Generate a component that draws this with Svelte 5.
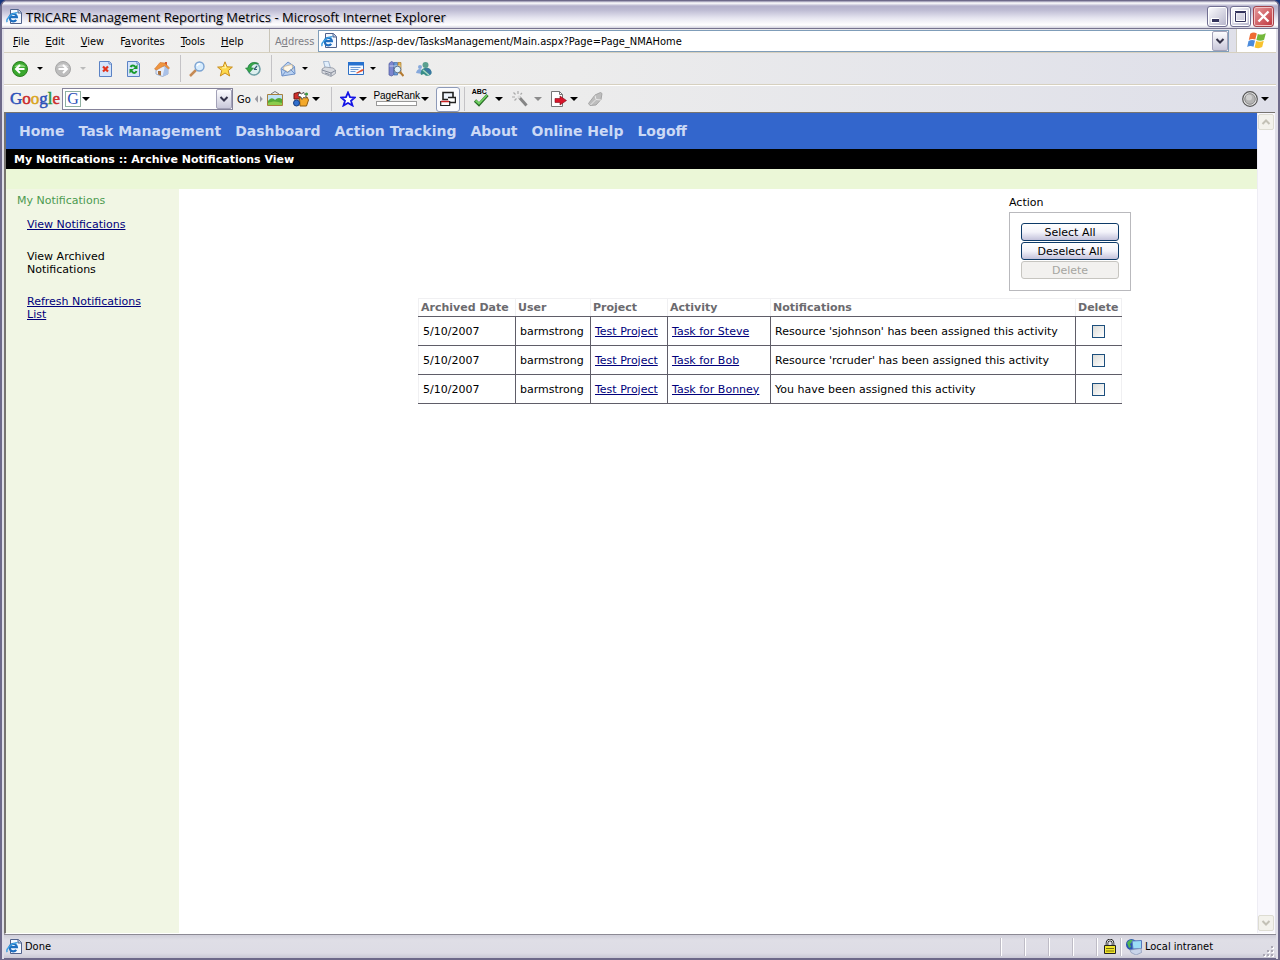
<script lang="ts">
	interface Notice {
		date: string;
		user: string;
		project: string;
		activity: string;
		text: string;
		checked: boolean;
	}

	const menus = [
		['', 'F', 'ile'],
		['', 'E', 'dit'],
		['', 'V', 'iew'],
		['F', 'a', 'vorites'],
		['', 'T', 'ools'],
		['', 'H', 'elp']
	];

	const nav = ['Home', 'Task Management', 'Dashboard', 'Action Tracking', 'About', 'Online Help', 'Logoff'];

	let url = $state('https://asp-dev/TasksManagement/Main.aspx?Page=Page_NMAHome');
	let query = $state('');

	let notices: Notice[] = $state([
		{
			date: '5/10/2007',
			user: 'barmstrong',
			project: 'Test Project',
			activity: 'Task for Steve',
			text: "Resource 'sjohnson' has been assigned this activity",
			checked: false
		},
		{
			date: '5/10/2007',
			user: 'barmstrong',
			project: 'Test Project',
			activity: 'Task for Bob',
			text: "Resource 'rcruder' has been assigned this activity",
			checked: false
		},
		{
			date: '5/10/2007',
			user: 'barmstrong',
			project: 'Test Project',
			activity: 'Task for Bonney',
			text: 'You have been assigned this activity',
			checked: false
		}
	]);

	const anyChecked = $derived(notices.some((n) => n.checked));

	function setAll(value: boolean) {
		for (const n of notices) n.checked = value;
	}

	function removeChecked() {
		notices = notices.filter((n) => !n.checked);
	}
</script>

{#snippet ie()}
	<svg class="icon" viewBox="0 0 16 16" aria-hidden="true">
		<path d="M4.500.500h8l3 3v11h-11z" fill="#f4f8ff" stroke="#50628c" />
		<path d="M12 .5V4h3.5" fill="#b9cbe8" stroke="#50628c" />
		<path d="M10.200 10.800A3.700 3.700 0 1 1 10.900 8.200H3.600" fill="none" stroke="#1f6fc0" stroke-width="2.200" />
		<path d="M1.200 13.200C-.5 10.500 5 4 11.500 3.600" fill="none" stroke="#3e9fe0" stroke-width="1.400" />
	</svg>
{/snippet}

{#snippet caret(label: string, muted = false)}
	<button class="caret" class:muted aria-label={label}></button>
{/snippet}

{#snippet chevron(up = false)}
	<svg class="chevron" viewBox="0 0 10 8" aria-hidden="true">
		<path d={up ? 'M1.500 6 5 2.500 8.500 6' : 'M1.500 2 5 5.500 8.500 2'} fill="none" stroke="currentColor" stroke-width="2" />
	</svg>
{/snippet}

<div class="window">
	<header class="titlebar">
		{@render ie()}
		<h1>TRICARE Management Reporting Metrics - Microsoft Internet Explorer</h1>
		<button class="win-btn" aria-label="Minimize">
			<svg viewBox="0 0 19 19"><path d="M3 13.500h8" stroke="#fff" stroke-width="5" /><path d="M4 13.500h7" stroke="#34345c" stroke-width="3" /></svg>
		</button>
		<button class="win-btn" aria-label="Maximize">
			<svg viewBox="0 0 19 19"><path d="M4 4.500h11v10H4z" fill="none" stroke="#fff" stroke-width="3" /><path d="M4.500 5.500h10v9h-10zM4 4.500h11" fill="none" stroke="#34345c" /></svg>
		</button>
		<button class="win-btn close" aria-label="Close">
			<svg viewBox="0 0 19 19"><path d="m4.500 4.500 10 10m0-10-10 10" stroke="#fff" stroke-width="2.400" /></svg>
		</button>
	</header>

	<div class="chrome">
		<div class="menubar">
			<nav class="menus" aria-label="Menu bar">
				{#each menus as [pre, key, post] (post)}
					<button>{pre}<u>{key}</u>{post}</button>
				{/each}
			</nav>
			<div class="address">
				<label for="url">A<u>d</u>dress</label>
				<div class="field">
					{@render ie()}
					<input id="url" type="text" bind:value={url} />
					<button class="drop" aria-label="Show addresses">{@render chevron()}</button>
				</div>
			</div>
			<div class="flag">
				<svg viewBox="0 0 20 18" aria-hidden="true">
					<path d="M3.200 1.800C5.500.300 7.300.300 9.800 1.400L8.300 7.600C6 6.700 4 6.800 1.800 8z" fill="#ef6a32" />
					<path d="M10.800 1.900c2.400 1 4.800 1 8-.700l-1.700 6.500c-2.300 1.300-4.900 1.300-7.700.300z" fill="#74b83c" />
					<path d="M1.500 9c2.300-1.200 4.300-1.300 6.500-.400L6.500 14.800c-2.300-1-4.300-.900-6.300.300z" fill="#4b8bdc" />
					<path d="M9.100 9.100c2.800 1 5.200.900 7.700-.300l-1.600 6.300c-2.600 1.500-5 1.400-7.600.300z" fill="#f8c22e" />
				</svg>
			</div>
		</div>

		<div class="toolbar standard">
			<div class="split loose">
				<button class="tool" aria-label="Back">
					<svg class="icon" viewBox="0 0 16 16"><circle cx="8" cy="8" r="7.500" fill="#3aa82e" stroke="#2b7d20" /><path d="M2.500 6a6 4.500 0 0 1 11 0" fill="#8bd67a" /><path d="M12.500 8h-8M8 4 4 8l4 4" fill="none" stroke="#fff" stroke-width="2" /></svg>
				</button>
				{@render caret('Back history')}
			</div>
			<div class="split loose">
				<button class="tool" aria-label="Forward">
					<svg class="icon" viewBox="0 0 16 16"><circle cx="8" cy="8" r="7.500" fill="#bdbdbd" stroke="#a6a6a6" /><path d="M2.500 6a6 4.500 0 0 1 11 0" fill="#d8d8d8" /><path d="M3.500 8h8M8 4l4 4-4 4" fill="none" stroke="#fff" stroke-width="2" /></svg>
				</button>
				{@render caret('Forward history', true)}
			</div>
			<button class="tool" aria-label="Stop">
				<svg class="icon" viewBox="0 0 16 16"><path d="M1.500.500h10l2 2v13h-12z" fill="#d4e4fb" stroke="#5b82c4" /><path d="M11 .500v2.500h2.500" fill="#fff" stroke="#5b82c4" /><path d="m5 5.500 5 5m0-5-5 5" stroke="#e2331c" stroke-width="2.200" /></svg>
			</button>
			<button class="tool" aria-label="Refresh">
				<svg class="icon" viewBox="0 0 16 16"><path d="M1.500.500h10l2 2v13h-12z" fill="#d4e4fb" stroke="#5b82c4" /><path d="M11 .500v2.500h2.500" fill="#fff" stroke="#5b82c4" /><path d="M4.500 6c1-2 3.500-2 5 0M10.500 10c-1 2.500-3.500 2.500-5 0" fill="none" stroke="#189a2d" stroke-width="2" /><path d="M11.500 3.500V8H7zM3.500 12.500V8H8z" fill="#189a2d" /></svg>
			</button>
			<button class="tool" aria-label="Home">
				<svg class="icon" viewBox="0 0 16 16"><path d="M2 8.500 7 4l5 2.500 2 1.500v5l-5.500 2.500L2 13z" fill="#e6edf9" stroke="#7d97c3" stroke-width=".7" /><path d="m8.500 15.500 5.500-2.500V7l-3-2z" fill="#a9c1e8" /><path d="M.500 8 6 1.500l5 .500L15.500 7l-1 1-4-3.500-8 4.500z" fill="#ef9540" stroke="#c76a20" stroke-width=".5" /><path d="M11 1h2v3.500l-2-2z" fill="#d25a32" /><path d="M4 10h3v4.500l-3-1z" fill="#a86f3a" /></svg>
			</button>
			<span class="sep"></span>
			<button class="tool" aria-label="Search">
				<svg class="icon" viewBox="0 0 16 16"><path d="m1 15 6-6" stroke="#c58a55" stroke-width="2.500" /><circle cx="10.500" cy="5.500" r="4.500" fill="#d7ecfd" stroke="#7ba3d2" stroke-width="1.400" /><path d="M8 5a3 3 0 0 1 3-2.200" fill="none" stroke="#fff" stroke-width="1.400" /></svg>
			</button>
			<button class="tool" aria-label="Favorites">
				<svg class="icon" viewBox="0 0 16 16"><path d="m8 .8 2 5 5.400.300-4.200 3.500 1.500 5.400L8 12l-4.700 3 1.500-5.400L.600 6.100 6 5.800z" fill="#fdd94c" stroke="#c98c1c" /><path d="m8 3.500 1 3.300H5" fill="none" stroke="#fff6b8" /></svg>
			</button>
			<button class="tool" aria-label="History">
				<svg class="icon" viewBox="0 0 16 16"><circle cx="9" cy="8" r="6" fill="#dcefee" stroke="#6d9fa5" stroke-width="1.600" /><path d="M9 8.500 12 5M9 8.500h3" stroke="#365b74" stroke-width="1.200" /><path d="M13.500 2.500C9 0 3.500 2 3 7H.500l4 4.500L8.500 7H6c0-3 4-5 7.500-4.500z" fill="#38a84a" stroke="#1d7a35" stroke-width=".6" /></svg>
			</button>
			<span class="sep"></span>
			<div class="split">
				<button class="tool" aria-label="Mail">
					<svg class="icon" viewBox="0 0 16 16"><path d="M1 7.500 8 1l6.500 4.500L15 13 2 15z" fill="#b8d1f2" stroke="#6f92c8" /><path d="m4 5.500 8-2 .8 5L8 11 3.500 8.500z" fill="#fff8e8" stroke="#c8a875" stroke-width=".6" /><path d="m1.500 8 6 3.500L14.500 6M2 15l4-5M15 13l-4.500-4.500" fill="none" stroke="#6f92c8" /></svg>
				</button>
				{@render caret('Mail options')}
			</div>
			<button class="tool" aria-label="Print">
				<svg class="icon" viewBox="0 0 16 16"><path d="m3.500.500 5-.3 2 7-5 1z" fill="#e2effc" stroke="#8ea6c4" stroke-width=".8" /><path d="M2 8 5 6l8 1 2.500 2v3.500L11 15.500 2 12z" fill="#d6d9df" stroke="#8f95a1" stroke-width=".8" /><path d="m2 9 9 3 4.500-2.500M11 12v3M5 12l4.500 1.500" fill="none" stroke="#848b99" /></svg>
			</button>
			<div class="split">
				<button class="tool" aria-label="Edit">
					<svg class="icon" viewBox="0 0 16 16"><path d="M.500 1.500h15v12H.500z" fill="#f2f8ff" stroke="#2d6fc4" /><path d="M0 1h16v3.500H0z" fill="#2671cf" /><path d="M2.500 6.500h10M2.500 8.500h8M2.500 10.500h5" stroke="#6c9ad4" /><path d="m8 12 5.500-3.500L16 8l-1 2-6 2.500z" fill="#e4542f" /></svg>
				</button>
				{@render caret('Edit options')}
			</div>
			<button class="tool" aria-label="Research">
				<svg class="icon" viewBox="0 0 16 16"><path d="M1 2.500 3.500.500l2 1V14l-2 1L1 14z" fill="#7c86cf" stroke="#4c569b" stroke-width=".7" /><path d="M6 1.500h3.500V14H6z" fill="#6b9bd8" stroke="#406fac" stroke-width=".7" /><path d="M10 1.500h3V12h-3z" fill="#e4b458" stroke="#a87b2a" stroke-width=".7" /><path d="M1.500 5h11" stroke="#fff" stroke-opacity=".6" /><circle cx="9.500" cy="8.500" r="3.300" fill="#dff1fb" stroke="#64778e" /><path d="m12 11 3.500 4" stroke="#b47a30" stroke-width="2" /></svg>
			</button>
			<button class="tool" aria-label="Messenger">
				<svg class="icon" viewBox="0 0 16 16"><circle cx="4" cy="6" r="2" fill="#86a9dc" /><path d="M0 12c1-5 5-5 7-2l-1 3z" fill="#86a9dc" /><circle cx="9.500" cy="4" r="3" fill="#5aa08f" /><path d="M5 14c-1-3 1-7 4-7 4-1 7 2 6.500 5.500C14 15 10 16 8 13z" fill="#368d87" /><path d="m7 9 6 5" stroke="#a9d7c2" stroke-width="1.500" /><path d="M8 7.500h5c3 2 3 5 1 6.500z" fill="#3d6eaf" fill-opacity=".7" /></svg>
			</button>
		</div>

		<div class="toolbar google">
			<span class="logo"><i class="b">G</i><i class="r">o</i><i class="y">o</i><i class="b">g</i><i class="g">l</i><i class="r">e</i></span>
			<div class="field search">
				<span class="g-mark">G</span>
				{@render caret('Search type')}
				<input type="text" aria-label="Google search" bind:value={query} />
				<button class="drop" aria-label="Search history">{@render chevron()}</button>
			</div>
			<button class="go">Go</button>
			<span class="grip"></span>
			<button class="tool" aria-label="Images">
				<svg class="icon" viewBox="0 0 16 16"><path d="m4 3 4-2.500L12 3" fill="none" stroke="#777" /><path d="M.500 3.500h15v11H.500z" fill="#bfe2f6" stroke="#a8803c" /><path d="M1 10c3-4 5-3 7-1 2-2 4-3 7-1v6H1z" fill="#54a836" /><path d="M1 12c4-2 9-2 14 0v2H1z" fill="#8ccc4c" /></svg>
			</button>
			<div class="split tight">
				<button class="tool" aria-label="Games">
					<svg class="icon" viewBox="0 0 16 16"><path d="M1 2.500 7 1v7H1z" fill="#d22f2a" stroke="#6d1713" /><path d="M6.500 7 14 6l1.500 3-2 6H7z" fill="#f4a92a" stroke="#8f5a10" /><circle cx="3.500" cy="12" r="3" fill="#2f6fce" stroke="#183d7c" /><path d="m6 2 3 1 1.500-2 1 2.500 3-.5-2 2 1 2-3-.500L9 8.500 8 6 5 5z" fill="#fff" stroke="#333" stroke-width=".7" /><circle cx="13.500" cy="3" r="1.500" fill="#3a9a42" /></svg>
				</button>
				{@render caret('Games options')}
			</div>
			<span class="sep"></span>
			<div class="split tight">
				<button class="tool" aria-label="Bookmarks">
					<svg class="icon" viewBox="0 0 16 16"><path d="m8 1.500 2 4.700 5 .300-4 3.300 1.500 4.700L8 12l-4.500 2.500L5 9.800 1 6.500l5-.300z" fill="#fff" stroke="#1414e6" stroke-width="1.800" /></svg>
				</button>
				{@render caret('Bookmark options')}
			</div>
			<div class="split tight">
				<button class="rank">PageRank<span></span></button>
				{@render caret('PageRank options')}
			</div>
			<button class="popup" aria-label="Popup blocker">
				<svg class="icon" viewBox="0 0 16 16"><path d="M3 1.500h10v7H3z" fill="#eef3fc" stroke="#222" stroke-width="1.600" /><path d="M8 6.500h7.500v5H8" fill="#fff" stroke="#222" stroke-width="1.400" /><path d="M.700 10.500h9v4h-9z" fill="#fff" stroke="#222" stroke-width="1.200" /><path d="M1 10.500h8" stroke="#c22" stroke-width="1.300" /></svg>
			</button>
			<span class="sep snug"></span>
			<div class="split">
				<button class="tool spell" aria-label="Spell check">
					<span>ABC</span>
					<svg class="icon" viewBox="0 0 16 16"><path d="m2 9.500 4 4L14.500 4" fill="none" stroke="#2c702a" stroke-width="3.200" /><path d="m2.500 9.500 3.500 3L14 4" fill="none" stroke="#6fd060" stroke-width="1.800" /></svg>
				</button>
				{@render caret('Spell check options')}
			</div>
			<div class="split">
				<button class="tool" aria-label="AutoFill">
					<svg class="icon" viewBox="0 0 16 16"><path d="m7 6 7.500 8.500" stroke="#858585" stroke-width="3" /><path d="m6 5 2 2" stroke="#ddd" stroke-width="3" /><path d="M6 0v3M1.500 1.500l2 2M0 6h3M2.500 9.500l2-2M10 2 8.500 3.500" stroke="#aaa" stroke-width="1.200" /></svg>
				</button>
				{@render caret('AutoFill options', true)}
			</div>
			<div class="split tight">
				<button class="tool" aria-label="Send to">
					<svg class="icon" viewBox="0 0 16 16"><path d="M.500.500h8l3 3v12H.500z" fill="#fff" stroke="#777" /><path d="M8.500.500v3h3" fill="none" stroke="#777" /><path d="M4 7.500h5V5l6.500 4.500L9 14v-2.500H4z" fill="#d8142a" stroke="#7c0b18" stroke-width=".6" /></svg>
				</button>
				{@render caret('Send options')}
			</div>
			<button class="tool" aria-label="Highlight">
				<svg class="icon" viewBox="0 0 16 16"><path d="M1.500 12.500 8 4l5.500-2.500 1.500 1-1 6-5 5.500-6 .500z" fill="#bdbdbd" stroke="#a5a5a5" /><path d="m8 4.500 1 4 5 .500M9 8.500 3.500 14" fill="none" stroke="#e8e8e8" /></svg>
			</button>
			<div class="split tight account">
				<button class="tool" aria-label="Account">
					<svg class="icon" viewBox="0 0 16 16"><circle cx="8" cy="8" r="7.300" fill="#e8e8e8" stroke="#555" stroke-width="1.200" /><circle cx="8" cy="8" r="5.300" fill="#b4b4b4" stroke="#8b8b8b" /><circle cx="7" cy="6.500" r="3" fill="#cfcfcf" /></svg>
				</button>
				{@render caret('Account options')}
			</div>
		</div>
	</div>

	<div class="viewport">
		<div class="page">
			<nav class="topnav" aria-label="Site">
				{#each nav as item (item)}
					<a href="#top">{item}</a>
				{/each}
			</nav>
			<h2 class="crumb">My Notifications :: Archive Notifications View</h2>
			<div class="strip"></div>
			<div class="columns">
				<aside>
					<h3>My Notifications</h3>
					<ul>
						<li><a href="#view">View Notifications</a></li>
						<li>View Archived Notifications</li>
						<li><a href="#refresh">Refresh Notifications List</a></li>
					</ul>
				</aside>
				<main>
					<div class="action">
						<span id="action-title">Action</span>
						<div class="panel" role="group" aria-labelledby="action-title">
							<button onclick={() => setAll(true)}>Select All</button>
							<button onclick={() => setAll(false)}>Deselect All</button>
							<button disabled={!anyChecked} onclick={removeChecked}>Delete</button>
						</div>
					</div>
					<table>
						<thead>
							<tr>
								<th class="date">Archived Date</th>
								<th class="user">User</th>
								<th class="project">Project</th>
								<th class="activity">Activity</th>
								<th class="text">Notifications</th>
								<th class="del">Delete</th>
							</tr>
						</thead>
						<tbody>
							{#each notices as n (n.activity)}
								<tr>
									<td>{n.date}</td>
									<td>{n.user}</td>
									<td><a href="#project">{n.project}</a></td>
									<td><a href="#activity">{n.activity}</a></td>
									<td>{n.text}</td>
									<td class="check"><input type="checkbox" aria-label="Delete {n.activity}" bind:checked={n.checked} /></td>
								</tr>
							{/each}
						</tbody>
					</table>
				</main>
			</div>
		</div>
		<div class="scrollbar">
			<button aria-label="Scroll up">{@render chevron(true)}</button>
			<button aria-label="Scroll down">{@render chevron()}</button>
		</div>
	</div>

	<footer class="status">
		<span class="state">{@render ie()}Done</span>
		<span class="cell"></span>
		<span class="cell"></span>
		<span class="cell"></span>
		<span class="cell"></span>
		<span class="cell">
			<svg class="icon" viewBox="0 0 16 16" aria-label="Secure" role="img"><path d="M5 7V4a3 3 0 0 1 6 0v3" fill="none" stroke="#222" stroke-width="2.600" /><path d="M5 7V4a3 3 0 0 1 6 0v3" fill="none" stroke="#ddd" /><path d="M2.500 6.500h11v8h-11z" fill="#f0e52c" stroke="#222" /><path d="M4 9.500h8M4 12h8" stroke="#77710a" /></svg>
		</span>
		<span class="cell zone">
			<svg class="icon" viewBox="0 0 16 16" aria-hidden="true"><circle cx="5.500" cy="5.500" r="5.500" fill="#2a54b4" /><path d="M1 4c2-4 6-4 6-2L4 5l1 3-2 1z" fill="#51b653" /><path d="m6 2 9.500-.500v8L7 10z" fill="#9adcf6" stroke="#5878bd" /><path d="m4 11 11-1.500.500 4L10 16l-5-2.500z" fill="#c9d4ea" stroke="#8493b5" stroke-width=".7" /></svg>
			Local intranet
		</span>
		<svg class="resize" viewBox="0 0 12 12" aria-hidden="true">
			<path d="M9 2h2M5 6h2M9 6h2M1 10h2M5 10h2M9 10h2" stroke="#fff" stroke-width="2" />
			<path d="M8 1h2M4 5h2M8 5h2M0 9h2M4 9h2M8 9h2" stroke="#aaa8b4" stroke-width="2" />
		</svg>
	</footer>
</div>

<style>
	:global(body) {
		background: #16357e;
	}

	.window {
		--ui: 'DejaVu Sans Condensed', 'DejaVu Sans', sans-serif;
		--page: 'DejaVu Sans', sans-serif;
		box-sizing: border-box;
		min-height: 100vh;
		display: flex;
		flex-direction: column;
		border: solid #6d6989;
		border-width: 1px 2px;
		border-radius: 7px 7px 0 0;
		background: #e0dfe8;
		font-family: var(--ui);
		font-size: 11px;
		line-height: 13px;
		color: #000;
		overflow: hidden;
	}

	button,
	input {
		font: inherit;
		color: inherit;
		margin: 0;
		padding: 0;
		border: 0;
		background: none;
	}

	.icon {
		width: 16px;
		height: 16px;
		flex: none;
		display: block;
	}

	/* Title bar */
	.titlebar {
		display: flex;
		align-items: center;
		gap: 2px;
		height: 28px;
		box-sizing: border-box;
		padding: 4px 4px 0;
		background: linear-gradient(#8d89a8, #fff 2px, #b3b0cb 5px, #bdbbd3 9px, #e6e5f0 17px, #fff 24px, #d2d1de);
		border-bottom: 1px solid #77738f;
	}

	.titlebar h1 {
		flex: 1;
		margin: 0 0 0 2px;
		font-family: 'Open Sans', sans-serif;
		font-size: 13px;
		font-weight: 400;
		line-height: 20px;
		text-shadow: 1px 1px 1px #a9a7bd;
	}

	.win-btn {
		width: 21px;
		height: 21px;
		border: 1px solid #716f92;
		border-radius: 3px;
		box-shadow: inset 0 0 0 1px #fff;
		background: linear-gradient(135deg, #fdfdff, #b4b3ca);
	}

	.win-btn svg {
		display: block;
		width: 19px;
		height: 19px;
	}

	.close {
		background: linear-gradient(135deg, #e59a9c, #c0343c);
		border-color: #a5444c;
		box-shadow: inset 0 0 0 1px #f2c3c5;
	}

	/* Menu and toolbars */
	.chrome {
		margin: 0 2px;
		background: linear-gradient(90deg, #f2f1ef, #ececec 45%, #dedfe9);
	}

	.menubar {
		display: flex;
		height: 24px;
		box-sizing: border-box;
		border-bottom: 1px solid #d6d0bf;
	}

	.menus {
		display: flex;
		align-items: center;
		gap: 16px;
		width: 256px;
		padding: 2px 0 0 9px;
		border-right: 1px solid #c9c5b8;
	}

	.address {
		flex: 1;
		display: flex;
		align-items: center;
		gap: 4px;
		padding-right: 7px;
	}

	.address label {
		color: #7d7d84;
		padding: 2px 0 0 5px;
	}

	.field {
		display: flex;
		align-items: center;
		box-sizing: border-box;
		height: 22px;
		padding-left: 2px;
		border: 1px solid #7f9db9;
		background: #fff;
	}

	.field input {
		flex: 1;
		min-width: 0;
		padding-top: 2px;
		outline: 0;
	}

	.address .field {
		flex: 1;
		gap: 3px;
	}

	.drop {
		display: flex;
		align-items: center;
		justify-content: center;
		width: 16px;
		height: 20px;
		border: 1px solid #a3a2b8;
		border-radius: 2px;
		box-sizing: border-box;
		background: linear-gradient(#fdfdff, #c9c8da);
		color: #333248;
	}

	.chevron {
		width: 10px;
		height: 8px;
	}

	.flag {
		width: 39px;
		display: flex;
		align-items: center;
		justify-content: center;
		background: #fff;
		border-left: 1px solid #cfccc2;
	}

	.flag svg {
		width: 20px;
		height: 18px;
	}

	.toolbar {
		display: flex;
		align-items: center;
		box-sizing: border-box;
	}

	.standard {
		height: 32px;
		gap: 8px;
		padding-left: 6px;
		border-bottom: 1px solid #d6d0bf;
	}

	.google {
		height: 27px;
		gap: 6px;
		padding-left: 6px;
		border-top: 1px solid #fff;
	}

	.split {
		display: flex;
		align-items: center;
		gap: 2px;
	}

	.google .split {
		gap: 3px;
	}

	.split.loose {
		gap: 5px;
	}

	.google .split.tight {
		gap: 0;
	}

	.tool {
		display: flex;
		flex: none;
		justify-content: center;
		width: 20px;
	}

	.caret {
		width: 10px;
		height: 16px;
		display: flex;
		align-items: center;
		justify-content: center;
	}

	.caret::before {
		content: '';
		border: solid transparent;
		border-width: 4px 4px 0;
		border-top-color: #000;
	}

	.standard .caret::before {
		border-width: 3px 3px 0;
	}

	.caret.muted::before {
		border-top-color: #8c8c8c;
	}

	.standard .caret.muted::before {
		border-top-color: #bbb;
	}

	.sep {
		width: 1px;
		align-self: stretch;
		margin: 2px -2px 2px 0;
		background: #c4c3c6;
	}

	.google .sep {
		margin: 1px 0 1px 4px;
	}

	.google .sep.snug {
		margin-left: -2px;
	}

	.logo {
		width: 50px;
		font-family: 'Liberation Serif', serif;
		font-size: 17px;
		line-height: 20px;
		-webkit-text-stroke: 0.5px;
	}

	.logo i {
		font-style: normal;
	}

	.b {
		color: #2c50b8;
	}

	.r {
		color: #cb2b2b;
	}

	.y {
		color: #d9a520;
	}

	.g {
		color: #2f9340;
	}

	.search {
		width: 171px;
		margin-left: -4px;
		border-color: #85839a;
	}

	.g-mark {
		width: 14px;
		height: 14px;
		border: 1px solid #8fb0a0;
		font-family: 'Liberation Serif', serif;
		font-size: 16px;
		line-height: 14px;
		text-align: center;
		color: #2c50b8;
	}

	.go {
		margin-left: -2px;
	}

	.grip {
		width: 8px;
		height: 8px;
		margin: 0 -4px 0 -2px;
		background: linear-gradient(90deg, #9a9aa2 3px, transparent 3px 5px, #9a9aa2 5px);
		clip-path: polygon(0 50%, 43% 0, 57% 0, 100% 50%, 57% 100%, 43% 100%);
	}

	.rank {
		display: flex;
		flex-direction: column;
		align-items: center;
		width: 46px;
		font-family: 'Liberation Sans', sans-serif;
		font-size: 10px;
		line-height: 11px;
	}

	.rank span {
		box-sizing: border-box;
		width: 41px;
		height: 5px;
		margin-bottom: 3px;
		border: 1px solid #999;
		background: #fff;
	}

	.popup {
		display: flex;
		align-items: center;
		justify-content: center;
		box-sizing: border-box;
		width: 24px;
		height: 25px;
		border: 1px solid #8d9ab8;
		border-radius: 3px;
		background: #fbfbfd;
	}

	.spell {
		position: relative;
	}

	.spell span {
		position: absolute;
		top: -3px;
		left: 1px;
		font-family: 'Liberation Sans', sans-serif;
		font-size: 7px;
		font-weight: 700;
		line-height: 8px;
	}

	.account {
		margin-left: auto;
		padding-right: 6px;
	}

	/* Page */
	.viewport {
		flex: 1;
		display: flex;
		margin: 0 3px 0 2px;
		border: solid #77746f;
		border-width: 1px 0 0 2px;
		border-bottom: 1px solid #fff;
		background: #fff;
		font-family: var(--page);
	}

	.page {
		flex: 1;
		display: flex;
		flex-direction: column;
	}

	.topnav {
		display: flex;
		gap: 14px;
		height: 36px;
		padding-left: 13px;
		background: #3366cc;
		font-size: 14px;
		font-weight: 700;
		line-height: 36px;
	}

	.topnav a {
		color: #ccd9f5;
		text-decoration: none;
	}

	.crumb {
		margin: 0;
		padding: 1px 0 0 8px;
		background: #000;
		color: #fff;
		font-size: 11px;
		line-height: 19px;
	}

	.strip {
		height: 20px;
		background: #ebf7d7;
	}

	.columns {
		flex: 1;
		display: flex;
	}

	aside {
		box-sizing: border-box;
		width: 173px;
		padding: 5px 24px 0 11px;
		background: #f1f6e4;
	}

	aside h3 {
		margin: 0;
		font-size: 11px;
		font-weight: 400;
		line-height: 14px;
		color: #4c9a50;
	}

	aside ul {
		list-style: none;
		margin: 10px 0 0;
		padding: 0 0 0 10px;
	}

	aside li {
		margin-bottom: 19px;
	}

	aside a,
	td a {
		color: #00007b;
	}

	main {
		flex: 1;
		display: flex;
		flex-direction: column;
		align-items: flex-end;
		gap: 7px;
		padding: 7px 126px 0 0;
	}

	.action {
		width: 122px;
	}

	.panel {
		display: flex;
		flex-direction: column;
		gap: 1px;
		margin-top: 3px;
		padding: 10px 11px 11px;
		border: 1px solid #b9b9bd;
	}

	.panel button {
		box-sizing: border-box;
		height: 18px;
		padding-top: 1px;
		border: 1px solid #0d3a68;
		border-radius: 3px;
		background: linear-gradient(#fff, #f3f3fa 50%, #c3c2db);
		line-height: 15px;
	}

	.panel button:disabled {
		border-color: #c6c5c0;
		background: #f2f1ef;
		color: #a5a5a0;
	}

	table {
		table-layout: fixed;
		width: 704px;
		margin-right: 9px;
		border-collapse: collapse;
	}

	th {
		height: 17px;
		padding: 0 2px;
		border: 1px solid #f0f0f2;
		border-bottom-color: #5f5d68;
		text-align: left;
		color: #6b6a6e;
		white-space: nowrap;
	}

	td {
		height: 28px;
		padding: 0 4px;
		border: 1px solid #5f5d68;
		white-space: nowrap;
	}

	td:first-child {
		border-left-color: #f0f0f2;
	}

	td:last-child {
		border-right-color: #f0f0f2;
	}

	.date {
		width: 92px;
	}

	.user {
		width: 70px;
	}

	.project {
		width: 72px;
	}

	.activity {
		width: 98px;
	}

	.del {
		width: 41px;
	}

	.check {
		padding: 0;
		text-align: center;
	}

	.check input {
		appearance: none;
		box-sizing: border-box;
		display: inline-block;
		width: 13px;
		height: 13px;
		border: 1px solid #1d4f7d;
		background: linear-gradient(135deg, #dcdcd8, #fff);
		vertical-align: middle;
	}

	.check input:checked {
		background: #21a121;
	}

	.scrollbar {
		display: flex;
		flex-direction: column;
		justify-content: space-between;
		width: 16px;
		padding: 1px 1px 2px 0;
		border-left: 1px solid #eeedf4;
		background: #f9f8fd;
	}

	.scrollbar button {
		height: 16px;
		border: 1px solid #dddcd2;
		border-radius: 2px;
		background: #f3f2ec;
		color: #c3c1b6;
	}

	/* Status bar */
	.status {
		display: flex;
		align-items: center;
		height: 23px;
		margin: 0 2px;
		padding-right: 1px;
		border-top: 1px solid #8c8a94;
		border-bottom: 1px solid #6d6989;
		background: linear-gradient(#cfced9, #dfdee6 5px, #dddce5 18px, #c9c8d5);
	}

	.state {
		flex: 1;
		display: flex;
		align-items: center;
		gap: 3px;
		padding-left: 2px;
	}

	.cell {
		box-sizing: border-box;
		display: flex;
		align-items: center;
		justify-content: center;
		width: 24px;
		height: 18px;
		border-left: 1px solid #fff;
		box-shadow: -1px 0 #bebcc6;
	}

	.zone {
		width: 142px;
		gap: 3px;
		padding-left: 4px;
		justify-content: flex-start;
	}

	.resize {
		width: 12px;
		height: 12px;
		align-self: flex-end;
	}
</style>
